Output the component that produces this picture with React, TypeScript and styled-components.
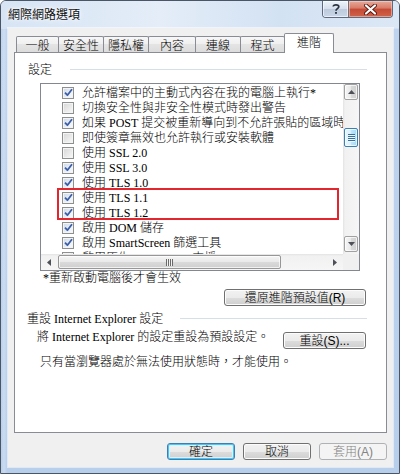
import React from "react";
import styled, { createGlobalStyle, css } from "styled-components";

const GlobalStyle = createGlobalStyle`
  html, body { margin: 0; padding: 0; background: #ffffff; }
  body { width: 400px; height: 474px; overflow: hidden; }
  *, *::before, *::after { box-sizing: border-box; }
`;

const UI_FONT = `"Liberation Sans", "Noto Sans CJK TC", sans-serif`;
const TEXT_FONT = `"Liberation Serif", "Noto Sans CJK TC", serif`;

const Window = styled.div`
  width: 400px;
  height: 474px;
  display: flex;
  flex-direction: column;
  border: 1px solid #4a5566;
  border-radius: 6px 6px 0 0;
  overflow: hidden;
  background:
    linear-gradient(to right, rgba(255, 255, 255, 0) 0px, rgba(255, 255, 255, 0.25) 3px, rgba(255, 255, 255, 0) 6px),
    linear-gradient(to bottom, #dde8f5 0px, #cfdff1 28px, #bdd3ee 28px, #b8cfeb 100%);
`;

const TitleBar = styled.div`
  height: 27px;
  display: flex;
  justify-content: space-between;
  align-items: flex-start;
  padding: 0 6px 0 7px;
  background: linear-gradient(to right, #d6e4f4, #e4edf8 40%, #d3e2f3 70%, #dbe7f5);
`;

const Title = styled.div`
  font-family: "Noto Sans CJK TC", sans-serif;
  font-size: 12px;
  line-height: 14px;
  margin-top: 6px;
  color: #111;
  text-shadow: 0 0 6px #ffffff, 0 0 3px #ffffff;
`;

const CaptionButtons = styled.div`
  display: flex;
  height: 17px;
  border: 1px solid #5d6b80;
  border-top: none;
  border-radius: 0 0 4px 4px;
  overflow: hidden;
`;

const CaptionButton = styled.div<{ $kind: "help" | "close" }>`
  display: flex;
  align-items: center;
  justify-content: center;
  ${(p) =>
    p.$kind === "help"
      ? css`
          width: 26px;
          border-right: 1px solid #6b6f77;
          background: linear-gradient(to bottom, #eef3f9 0%, #d5dfeb 50%, #bccadc 51%, #c9d7e8 100%);
          box-shadow: inset 0 0 0 1px rgba(255, 255, 255, 0.6);
        `
      : css`
          width: 43px;
          background: linear-gradient(to bottom, #e9a999 0%, #d77a68 45%, #c44a35 50%, #d1624a 100%);
          box-shadow: inset 0 0 0 1px rgba(255, 220, 210, 0.5);
        `}
`;

const Client = styled.div`
  flex: 1;
  margin: 0 6px 6px 7px;
  display: flex;
  flex-direction: column;
  padding: 5px 6px 0 6px;
  background: #f0f0f0;
  box-shadow: 0 0 0 1px rgba(255, 255, 255, 0.55);
`;

const TabStrip = styled.div`
  height: 20px;
  display: flex;
  align-items: flex-end;
  padding-left: 2px;
  position: relative;
  z-index: 1;
`;

const Tab = styled.div<{ $w: number; $active?: boolean }>`
  width: ${(p) => p.$w}px;
  margin-left: -1px;
  display: flex;
  align-items: center;
  justify-content: center;
  font-family: "Noto Sans CJK TC", sans-serif;
  font-size: 12px;
  font-weight: 300;
  color: #000;
  border: 1px solid #898c95;
  border-radius: 2px 2px 0 0;
  &:first-child { margin-left: 0; }
  ${(p) =>
    p.$active
      ? css`
          height: 20px;
          border-bottom: none;
          background: #ffffff;
          padding-bottom: 3px;
          line-height: 14px;
        `
      : css`
          height: 16px;
          margin-bottom: 1px;
          border-bottom: none;
          line-height: 14px;
          background: linear-gradient(to bottom, #f7f7f7 0%, #efefef 50%, #e4e4e4 50%, #dcdcdc 100%);
        `}
`;

const Panel = styled.div`
  height: 381px;
  margin-top: -1px;
  border: 1px solid #898c95;
  background: #ffffff;
  display: flex;
  flex-direction: column;
  font-family: ${TEXT_FONT};
  font-size: 12px;
  font-weight: 300;
  color: #000;
`;

const GroupHeader = styled.div<{ $left: number; $lineAt: number; $top: number }>`
  display: grid;
  grid-template-columns: ${(p) => p.$lineAt}px 1fr;
  align-items: center;
  margin-top: ${(p) => p.$top}px;
  padding-left: ${(p) => p.$left}px;
  padding-right: 19px;
  line-height: 14px;
  white-space: nowrap;
  &::after {
    content: "";
    height: 1px;
    margin-top: -1px;
    background: #d5dfe5;
  }
`;

const ListBox = styled.div`
  margin: 6px 0 0 25px;
  width: 320px;
  height: 188px;
  border: 1px solid #828790;
  display: grid;
  grid-template-columns: 1fr 16px;
  grid-template-rows: 1fr 16px;
  background: #ffffff;
`;

const ListContent = styled.div`
  position: relative;
  overflow: hidden;
  padding: 1px 0 0 21px;
`;

const Row = styled.div`
  height: 15px;
  display: flex;
  align-items: center;
  gap: 8px;
  white-space: nowrap;
  line-height: 14px;
`;

const Box = styled.span<{ $checked: boolean }>`
  flex: none;
  width: 12px;
  height: 12px;
  border: 1px solid #8e8f8f;
  display: flex;
  align-items: center;
  justify-content: center;
  background: ${(p) =>
    p.$checked
      ? "linear-gradient(135deg, #cdd9e8 0%, #eef3f9 70%, #f8fbfe 100%)"
      : "linear-gradient(135deg, #d6d6d6 0%, #eeeeee 70%, #fafafa 100%)"};
  box-shadow: inset 0 0 0 1px #f4f4f4;
`;

const Highlight = styled.div`
  position: absolute;
  left: 16px;
  top: 104px;
  width: 282px;
  height: 32px;
  border: 2px solid #e3262d;
  pointer-events: none;
`;

const VScroll = styled.div`
  display: flex;
  flex-direction: column;
  align-items: center;
  background: linear-gradient(to right, #e3e3e3 0px, #f1f1f1 2px, #f6f6f6 100%);
  padding: 0 1px 2px 1px;
`;

const ArrowBox = styled.div`
  width: 14px;
  height: 16px;
  border: 1px solid #a1a1a1;
  border-radius: 2px;
  display: flex;
  align-items: center;
  justify-content: center;
  background: linear-gradient(to right, #f6f6f6 0%, #e8e8e8 50%, #d9d9d9 51%, #d0d0d0 100%);
  box-shadow: inset 0 0 0 1px rgba(255, 255, 255, 0.7);
`;

const VThumb = styled.div<{ $offset: number }>`
  width: 14px;
  height: 19px;
  margin-top: ${(p) => p.$offset}px;
  margin-bottom: auto;
  border: 1px solid #3c7fb1;
  border-radius: 2px;
  display: flex;
  align-items: center;
  justify-content: center;
  background: linear-gradient(to right, #e9f6fd 0%, #d7effc 50%, #bde6fd 51%, #a6d9f4 100%);
  box-shadow: inset 0 0 0 1px rgba(255, 255, 255, 0.7);
`;

const VGrip = styled.span`
  width: 7px;
  height: 8px;
  background: repeating-linear-gradient(to bottom, #3c6e9a 0px, #3c6e9a 1px, #e8f6fe 1px, #e8f6fe 2px);
`;

const HScroll = styled.div`
  display: flex;
  align-items: center;
  background: linear-gradient(to bottom, #e3e3e3 0px, #f1f1f1 2px, #f6f6f6 100%);
  padding: 1px 0;
`;

const ArrowSlot = styled.div`
  width: 16px;
  height: 14px;
  flex: none;
  display: flex;
  align-items: center;
  justify-content: center;
`;

const HThumb = styled.div<{ $w: number }>`
  width: ${(p) => p.$w}px;
  height: 14px;
  margin-left: 1px;
  border: 1px solid #979797;
  border-radius: 2px;
  display: flex;
  align-items: center;
  justify-content: center;
  background: linear-gradient(to bottom, #f5f5f5 0%, #e9e9e9 50%, #dadada 51%, #cfcfcf 100%);
  box-shadow: inset 0 0 0 1px rgba(255, 255, 255, 0.7);
`;

const HGrip = styled.span`
  width: 7px;
  height: 7px;
  background: repeating-linear-gradient(to right, #6a6a6a 0px, #6a6a6a 1px, #f2f2f2 1px, #f2f2f2 2px);
`;

const HTrack = styled.div`
  flex: 1;
`;

const Corner = styled.div`
  background: #f0f0f0;
`;

const Note = styled.div<{ $left: number; $top: number }>`
  padding-left: ${(p) => p.$left}px;
  margin-top: ${(p) => p.$top}px;
  line-height: 14px;
  white-space: nowrap;
`;

const ActionRow = styled.div`
  display: flex;
  align-items: flex-start;
  justify-content: space-between;
  margin-top: 6px;
  padding: 0 20px 0 22px;
  height: 17px;
`;

const ActionText = styled.div`
  margin-top: -2px;
  line-height: 14px;
  white-space: nowrap;
`;

const Button = styled.div<{ $w: number; $variant?: "default" | "disabled" }>`
  width: ${(p) => p.$w}px;
  height: 17px;
  flex: none;
  display: flex;
  align-items: center;
  justify-content: center;
  font-family: ${UI_FONT};
  font-size: 12px;
  font-weight: 300;
  line-height: 14px;
  color: #000;
  border: 1px solid #707070;
  border-radius: 3px;
  background: linear-gradient(to bottom, #f2f2f2 0%, #ebebeb 50%, #dddddd 51%, #cfcfcf 100%);
  box-shadow: inset 0 0 0 1px #fcfcfc;
  white-space: nowrap;
  ${(p) =>
    p.$variant === "default" &&
    css`
      border-color: #3c7fb1;
      box-shadow: inset 0 0 0 1px #48c6f4, inset 0 0 0 2px #d8f1fd;
    `}
  ${(p) =>
    p.$variant === "disabled" &&
    css`
      border-color: #adb2b5;
      background: #f4f4f4;
      box-shadow: none;
      color: #838383;
    `}
`;

const RightButton = styled(Button)<{ $top: number }>`
  align-self: flex-end;
  margin-right: 20px;
  margin-top: ${(p) => p.$top}px;
`;

const Footer = styled.div`
  display: flex;
  justify-content: flex-end;
  gap: 8px;
  padding-top: 10px;
`;

const UpArrow = () => (
  <svg width="7" height="4" viewBox="0 0 7 4">
    <path d="M0 4 L3.5 0 L7 4 Z" fill="#4d5157" />
  </svg>
);
const DownArrow = () => (
  <svg width="7" height="4" viewBox="0 0 7 4">
    <path d="M0 0 L3.5 4 L7 0 Z" fill="#4d5157" />
  </svg>
);
const LeftArrow = () => (
  <svg width="4" height="7" viewBox="0 0 4 7">
    <path d="M4 0 L0 3.5 L4 7 Z" fill="#4d5157" />
  </svg>
);
const RightArrow = () => (
  <svg width="4" height="7" viewBox="0 0 4 7">
    <path d="M0 0 L4 3.5 L0 7 Z" fill="#4d5157" />
  </svg>
);

const Check = () => (
  <svg width="9" height="9" viewBox="0 0 9 9">
    <path d="M1 4.6 L3.4 7.2 L8 1.3" fill="none" stroke="#3c5ea8" strokeWidth="1.8" strokeLinejoin="round" />
  </svg>
);

const HelpGlyph = () => (
  <svg width="10" height="12" viewBox="0 0 10 12">
    <path
      d="M2.2 3.6 C2.2 1.2 7.8 1.2 7.8 3.8 C7.8 5.6 5 5.8 5 7.8"
      fill="none"
      stroke="#2b3340"
      strokeWidth="1.7"
    />
    <rect x="4.1" y="9" width="1.8" height="1.8" fill="#2b3340" />
  </svg>
);

const CloseGlyph = () => (
  <svg width="13" height="11" viewBox="0 0 13 11">
    <path d="M2 1.5 L11 9.5 M11 1.5 L2 9.5" stroke="#5a1a12" strokeWidth="4" strokeLinecap="round" />
    <path d="M2 1.5 L11 9.5 M11 1.5 L2 9.5" stroke="#ffffff" strokeWidth="2.2" strokeLinecap="round" />
  </svg>
);

const tabs: { label: string; w: number; active?: boolean }[] = [
  { label: "一般", w: 43 },
  { label: "安全性", w: 46 },
  { label: "隱私權", w: 46 },
  { label: "內容", w: 48 },
  { label: "連線", w: 46 },
  { label: "程式", w: 45 },
  { label: "進階", w: 50, active: true },
];

const items: { text: string; checked: boolean }[] = [
  { text: "允許檔案中的主動式內容在我的電腦上執行*", checked: true },
  { text: "切換安全性與非安全性模式時發出警告", checked: false },
  { text: "如果 POST 提交被重新導向到不允許張貼的區域時發出警告", checked: true },
  { text: "即使簽章無效也允許執行或安裝軟體", checked: false },
  { text: "使用 SSL 2.0", checked: false },
  { text: "使用 SSL 3.0", checked: true },
  { text: "使用 TLS 1.0", checked: true },
  { text: "使用 TLS 1.1", checked: true },
  { text: "使用 TLS 1.2", checked: true },
  { text: "啟用 DOM 儲存", checked: true },
  { text: "啟用 SmartScreen 篩選工具", checked: true },
  { text: "啟用原生 XMLHTTP 支援", checked: true },
];

export default function App() {
  return (
    <>
      <GlobalStyle />
      <Window>
        <TitleBar>
          <Title>網際網路選項</Title>
          <CaptionButtons>
            <CaptionButton $kind="help">
              <HelpGlyph />
            </CaptionButton>
            <CaptionButton $kind="close">
              <CloseGlyph />
            </CaptionButton>
          </CaptionButtons>
        </TitleBar>
        <Client>
          <TabStrip>
            {tabs.map((t) => (
              <Tab key={t.label} $w={t.w} $active={t.active}>
                {t.label}
              </Tab>
            ))}
          </TabStrip>
          <Panel>
            <GroupHeader $left={13} $lineAt={42} $top={10}>
              <span>設定</span>
            </GroupHeader>
            <ListBox>
              <ListContent>
                {items.map((it) => (
                  <Row key={it.text}>
                    <Box $checked={it.checked}>{it.checked && <Check />}</Box>
                    <span>{it.text}</span>
                  </Row>
                ))}
                <Highlight />
              </ListContent>
              <VScroll>
                <ArrowBox>
                  <UpArrow />
                </ArrowBox>
                <VThumb $offset={28}>
                  <VGrip />
                </VThumb>
                <ArrowBox>
                  <DownArrow />
                </ArrowBox>
              </VScroll>
              <HScroll>
                <ArrowSlot>
                  <LeftArrow />
                </ArrowSlot>
                <HThumb $w={223}>
                  <HGrip />
                </HThumb>
                <HTrack />
                <ArrowSlot>
                  <RightArrow />
                </ArrowSlot>
              </HScroll>
              <Corner />
            </ListBox>
            <Note $left={28} $top={0}>*重新啟動電腦後才會生效</Note>
            <RightButton $w={142} $top={4}>
              還原進階預設值(R)
            </RightButton>
            <GroupHeader $left={12} $lineAt={153} $top={6}>
              <span>重設 Internet Explorer 設定</span>
            </GroupHeader>
            <ActionRow>
              <ActionText>將 Internet Explorer 的設定重設為預設設定。</ActionText>
              <Button $w={83}>重設(S)...</Button>
            </ActionRow>
            <Note $left={25} $top={6}>只有當瀏覽器處於無法使用狀態時，才能使用。</Note>
          </Panel>
          <Footer>
            <Button $w={68} $variant="default">確定</Button>
            <Button $w={68}>取消</Button>
            <Button $w={68} $variant="disabled">套用(A)</Button>
          </Footer>
        </Client>
      </Window>
    </>
  );
}
